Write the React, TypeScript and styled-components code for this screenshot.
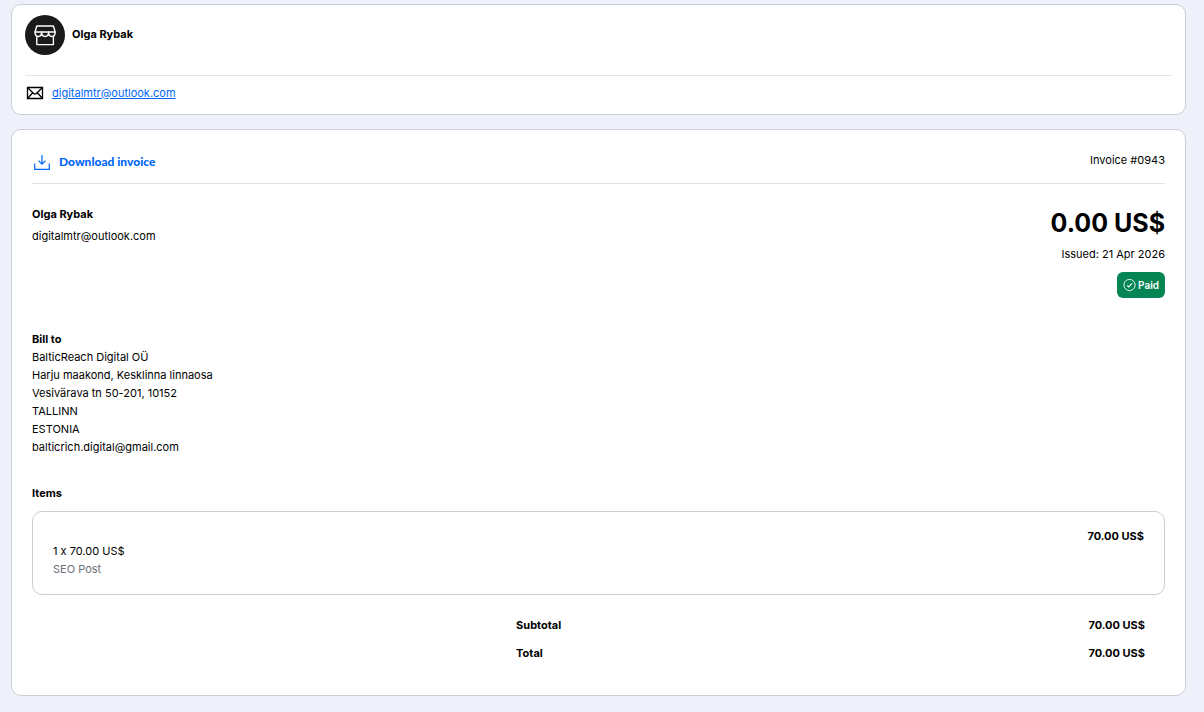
import React from "react";
import styled, { createGlobalStyle } from "styled-components";

const GlobalStyle = createGlobalStyle`
  * { box-sizing: border-box; }
  body {
    margin: 0;
    background: #eef1f9;
    color: #000;
    font-family: Inter, "Liberation Sans", sans-serif;
    font-size: 11px;
    line-height: 18px;
  }
  h1, h2, p, address, ul, dl, dd { margin: 0; padding: 0; }
`;

const Page = styled.main`
  display: flex;
  flex-direction: column;
  gap: 14px;
  padding: 4px 18px 16px 11px;
`;

const Card = styled.section`
  background: #fff;
  border: 1px solid #cbced6;
  border-radius: 10px;
`;

const SellerCard = styled(Card)`
  padding: 10px 13px 12px;
`;

const SellerHeader = styled.header`
  display: flex;
  gap: 7px;
  padding-bottom: 20px;
  border-bottom: 1px solid #e1e3e6;
`;

const Avatar = styled.div`
  width: 40px;
  height: 40px;
  border-radius: 50%;
  background: #1a1a1a;
`;

const Strong = styled.h2`
  font-size: 11px;
  line-height: 18px;
  font-weight: 700;
`;

const SellerName = styled(Strong)`
  padding-top: 10px;
`;

const ContactRow = styled.div`
  display: flex;
  align-items: center;
  gap: 8px;
  padding: 8px 0 0 1px;
`;

const EmailLink = styled.a`
  color: #0066f5;
  text-decoration: underline;
`;

const InvoiceCard = styled(Card)`
  padding: 20px 20px 33px;
`;

const Toolbar = styled.div`
  display: flex;
  justify-content: space-between;
  align-items: flex-start;
  height: 34px;
  border-bottom: 1px solid #e1e3e6;
`;

const DownloadButton = styled.button`
  display: flex;
  align-items: center;
  gap: 7px;
  padding: 2px 0 0;
  border: 0;
  background: none;
  color: #0066f5;
  font: 900 12px/20px Lato, sans-serif;
  cursor: pointer;
`;

const InvoiceNumber = styled.p`
  line-height: 20px;
`;

const Summary = styled.div`
  display: flex;
  justify-content: space-between;
  padding-top: 21px;
`;

const Issuer = styled.div`
  display: flex;
  flex-direction: column;
  gap: 4px;
`;

const AmountBlock = styled.div`
  display: flex;
  flex-direction: column;
  align-items: flex-end;
`;

const Amount = styled.h1`
  font-size: 25px;
  line-height: 36px;
  font-weight: 700;
`;

const Issued = styled.p`
  margin: 4px 0 9px;
`;

const PaidBadge = styled.span`
  display: flex;
  align-items: center;
  gap: 2px;
  height: 26px;
  padding: 0 6px;
  border-radius: 6px;
  background: #058553;
  color: #fff;
  font-size: 10px;
  font-weight: 600;
`;

const BillTo = styled.address`
  display: flex;
  flex-direction: column;
  margin-top: 32px;
  font-style: normal;
`;

const ItemsHeading = styled(Strong)`
  margin-top: 28px;
`;

const ItemList = styled.ul`
  list-style: none;
  margin-top: 9px;
`;

const Item = styled.li`
  display: flex;
  justify-content: space-between;
  padding: 15px 20px;
  height: 84px;
  border: 1px solid #cbced6;
  border-radius: 10px;
`;

const ItemDetails = styled.div`
  padding-top: 15px;
  font-feature-settings: "calt" 0;
`;

const Muted = styled.p`
  color: #6c6f75;
`;

const Money = styled.p`
  font-weight: 700;
`;

const Totals = styled.dl`
  display: flex;
  flex-direction: column;
  gap: 10px;
  width: 58.3333%;
  margin: 21px 0 0 auto;
  padding: 0 20px 0 12px;
`;

const TotalRow = styled.div`
  display: flex;
  justify-content: space-between;
  font-weight: 700;
`;

const StoreIcon = () => (
  <svg width="40" height="40" viewBox="0 0 40 40" fill="none" stroke="#fff" strokeWidth="1.4" strokeLinejoin="round" aria-hidden="true">
    <path d="M11.8 11h16.6l1.8 6H10z" />
    <path d="M10 17c0 6 6.6 6 6.6 0c0 6 7 6 7 0c0 6 6.6 6 6.6 0" />
    <path d="M11.8 21.2v8.4h16.6v-8.4" />
  </svg>
);

const MailIcon = () => (
  <svg width="18" height="14" viewBox="0 0 18 14" fill="none" stroke="#000" strokeWidth="1.3" aria-hidden="true">
    <path d="M1.5 1.5h15v11h-15z" />
    <path d="M1.5 1.5L7.6 7.4q1.4 1.2 2.8 0L16.5 1.5M1.5 12.5l5.2-5.8M16.5 12.5l-5.2-5.8" />
  </svg>
);

const DownloadIcon = () => (
  <svg width="20" height="20" viewBox="0 0 20 20" fill="none" stroke="#0066f5" strokeWidth="1.2" aria-hidden="true">
    <path d="M10 3v9M6.5 8.7L10 12.2l3.5-3.5M2.7 11.5v5.8h14.6v-5.8" />
  </svg>
);

const CheckIcon = () => (
  <svg width="13" height="13" viewBox="0 0 13 13" fill="none" stroke="#fff" strokeWidth="0.9" aria-hidden="true">
    <circle cx="6.5" cy="6" r="5.6" />
    <path d="M4.1 6.3l1.7 1.6 3.2-3.5" strokeWidth="1.1" />
  </svg>
);

const addressLines = [
  "BalticReach Digital OÜ",
  "Harju maakond, Kesklinna linnaosa",
  "Vesivärava tn 50-201, 10152",
  "TALLINN",
  "ESTONIA",
  "balticrich.digital@gmail.com",
];

const totals = [
  { label: "Subtotal", value: "70.00 US$" },
  { label: "Total", value: "70.00 US$" },
];

export default function App() {
  return (
    <>
      <GlobalStyle />
      <Page>
        <SellerCard>
          <SellerHeader>
            <Avatar><StoreIcon /></Avatar>
            <SellerName>Olga Rybak</SellerName>
          </SellerHeader>
          <ContactRow>
            <MailIcon />
            <EmailLink href="mailto:digitalmtr@outlook.com">digitalmtr@outlook.com</EmailLink>
          </ContactRow>
        </SellerCard>
        <InvoiceCard>
          <Toolbar>
            <DownloadButton type="button"><DownloadIcon />Download invoice</DownloadButton>
            <InvoiceNumber>Invoice #0943</InvoiceNumber>
          </Toolbar>
          <Summary>
            <Issuer>
              <Strong>Olga Rybak</Strong>
              <p>digitalmtr@outlook.com</p>
            </Issuer>
            <AmountBlock>
              <Amount>0.00 US$</Amount>
              <Issued>Issued: 21 Apr 2026</Issued>
              <PaidBadge><CheckIcon />Paid</PaidBadge>
            </AmountBlock>
          </Summary>
          <BillTo>
            <Strong>Bill to</Strong>
            {addressLines.map((line) => <span key={line}>{line}</span>)}
          </BillTo>
          <ItemsHeading>Items</ItemsHeading>
          <ItemList>
            <Item>
              <ItemDetails>
                <p>1 x 70.00 US$</p>
                <Muted>SEO Post</Muted>
              </ItemDetails>
              <Money>70.00 US$</Money>
            </Item>
          </ItemList>
          <Totals>
            {totals.map(({ label, value }) => (
              <TotalRow key={label}><dt>{label}</dt><dd>{value}</dd></TotalRow>
            ))}
          </Totals>
        </InvoiceCard>
      </Page>
    </>
  );
}
